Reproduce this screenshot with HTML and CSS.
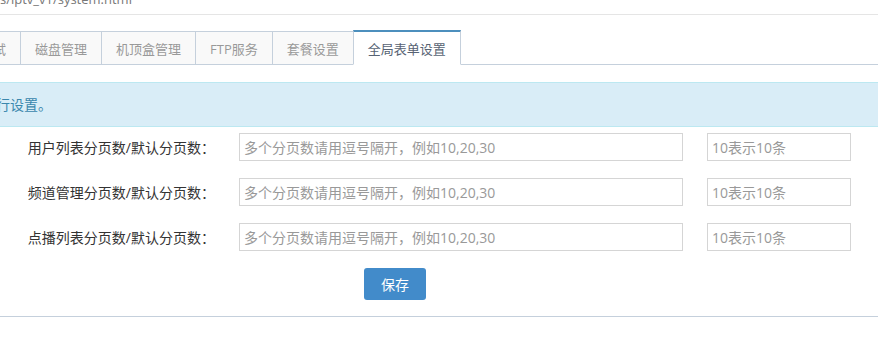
FILE: index.html
```html
<!DOCTYPE html>
<html lang="zh-CN">
<head>
    <meta charset="UTF-8">
    <meta name="viewport" content="width=device-width, initial-scale=1.0">
    <title>全局表单设置</title>
    <link rel="stylesheet" href="styles.css">
</head>
<body>

    <!-- Breadcrumbs -->
    <div class="breadcrumbs">
        <span>s/iptv_v1/system.html</span>
    </div>

    <div class="page-content">
        <!-- Tabs -->
        <ul class="nav-tabs">
            <li><a href="#">网络测试</a></li>
            <li><a href="#">磁盘管理</a></li>
            <li><a href="#">机顶盒管理</a></li>
            <li><a href="#">FTP服务</a></li>
            <li><a href="#">套餐设置</a></li>
            <li class="active"><a href="#">全局表单设置</a></li>
        </ul>

        <div class="tab-content">
            <div class="alert">请进行设置。</div>

            <form class="form-grid">
                <label>用户列表分页数/默认分页数：</label>
                <input type="text" class="input-long" placeholder="多个分页数请用逗号隔开，例如10,20,30">
                <input type="text" class="input-short" placeholder="10表示10条">

                <label>频道管理分页数/默认分页数：</label>
                <input type="text" class="input-long" placeholder="多个分页数请用逗号隔开，例如10,20,30">
                <input type="text" class="input-short" placeholder="10表示10条">

                <label>点播列表分页数/默认分页数：</label>
                <input type="text" class="input-long" placeholder="多个分页数请用逗号隔开，例如10,20,30">
                <input type="text" class="input-short" placeholder="10表示10条">

                <button type="submit" class="btn-save">保存</button>
            </form>
        </div>
    </div>

</body>
</html>
```

FILE: styles.css
```css
body {
    margin: 0;
    padding: 0;
    overflow: hidden;
    background: #fff;
    font-family: "Open Sans", "Noto Sans CJK SC", sans-serif;
    font-size: 13px;
    color: #393939;
}

/* Breadcrumbs */
.breadcrumbs {
    height: 14px;
    border-bottom: 1px solid #e5e5e5;
    overflow: hidden;
}

.breadcrumbs span {
    display: block;
    margin-top: -11px;
    line-height: 20px;
    color: #777;
}

/* Page */
.page-content {
    width: 1100px;
    margin-left: -61px;
    padding-top: 15px;
}

/* Tabs */
.nav-tabs {
    display: flex;
    align-items: flex-end;
    list-style: none;
    margin: 0;
    padding: 0;
}

.nav-tabs li {
    margin-right: -1px;
    margin-bottom: -1px;
}

.nav-tabs li a {
    display: block;
    padding: 8px 14px 6px;
    line-height: 18px;
    border: 1px solid #c5d0dc;
    background: #f9f9f9;
    color: #999;
    text-decoration: none;
}

.nav-tabs li.active a {
    position: relative;
    z-index: 1;
    border-top: 2px solid #4c8fbd;
    border-bottom-color: #fff;
    background: #fff;
    color: #576373;
}

/* Tab content */
.tab-content {
    border: 1px solid #c5d0dc;
    padding: 17px 12px 16px;
}

.alert {
    padding: 12px 15px;
    margin-bottom: 6px;
    line-height: 19px;
    font-size: 14px;
    background: #d9edf7;
    border: 1px solid #bce8f1;
    color: #3a87ad;
}

/* Form */
.form-grid {
    display: grid;
    grid-template-columns: 263px 444px 144px;
    grid-template-rows: repeat(3, 28px) 32px;
    column-gap: 24px;
    row-gap: 17px;
    margin: 0;
}

.form-grid label {
    text-align: right;
    font-size: 14px;
    line-height: 26px;
    padding-top: 2px;
    color: #333;
}

.form-grid input {
    box-sizing: border-box;
    height: 28px;
    padding: 0 4px;
    border: 1px solid #d5d5d5;
    border-radius: 0;
    font-family: "Open Sans", "Noto Sans CJK SC", sans-serif;
    font-size: 14px;
    color: #333;
    outline: none;
}

.form-grid input::placeholder {
    color: #999;
    opacity: 1;
}

/* Save button */
.btn-save {
    grid-column: 2;
    justify-self: start;
    margin-left: 125px;
    width: 62px;
    height: 32px;
    padding: 0;
    border: none;
    border-radius: 3px;
    background: #428bca;
    color: #fff;
    font-family: "Open Sans", "Noto Sans CJK SC", sans-serif;
    font-size: 14px;
    cursor: pointer;
}
```
